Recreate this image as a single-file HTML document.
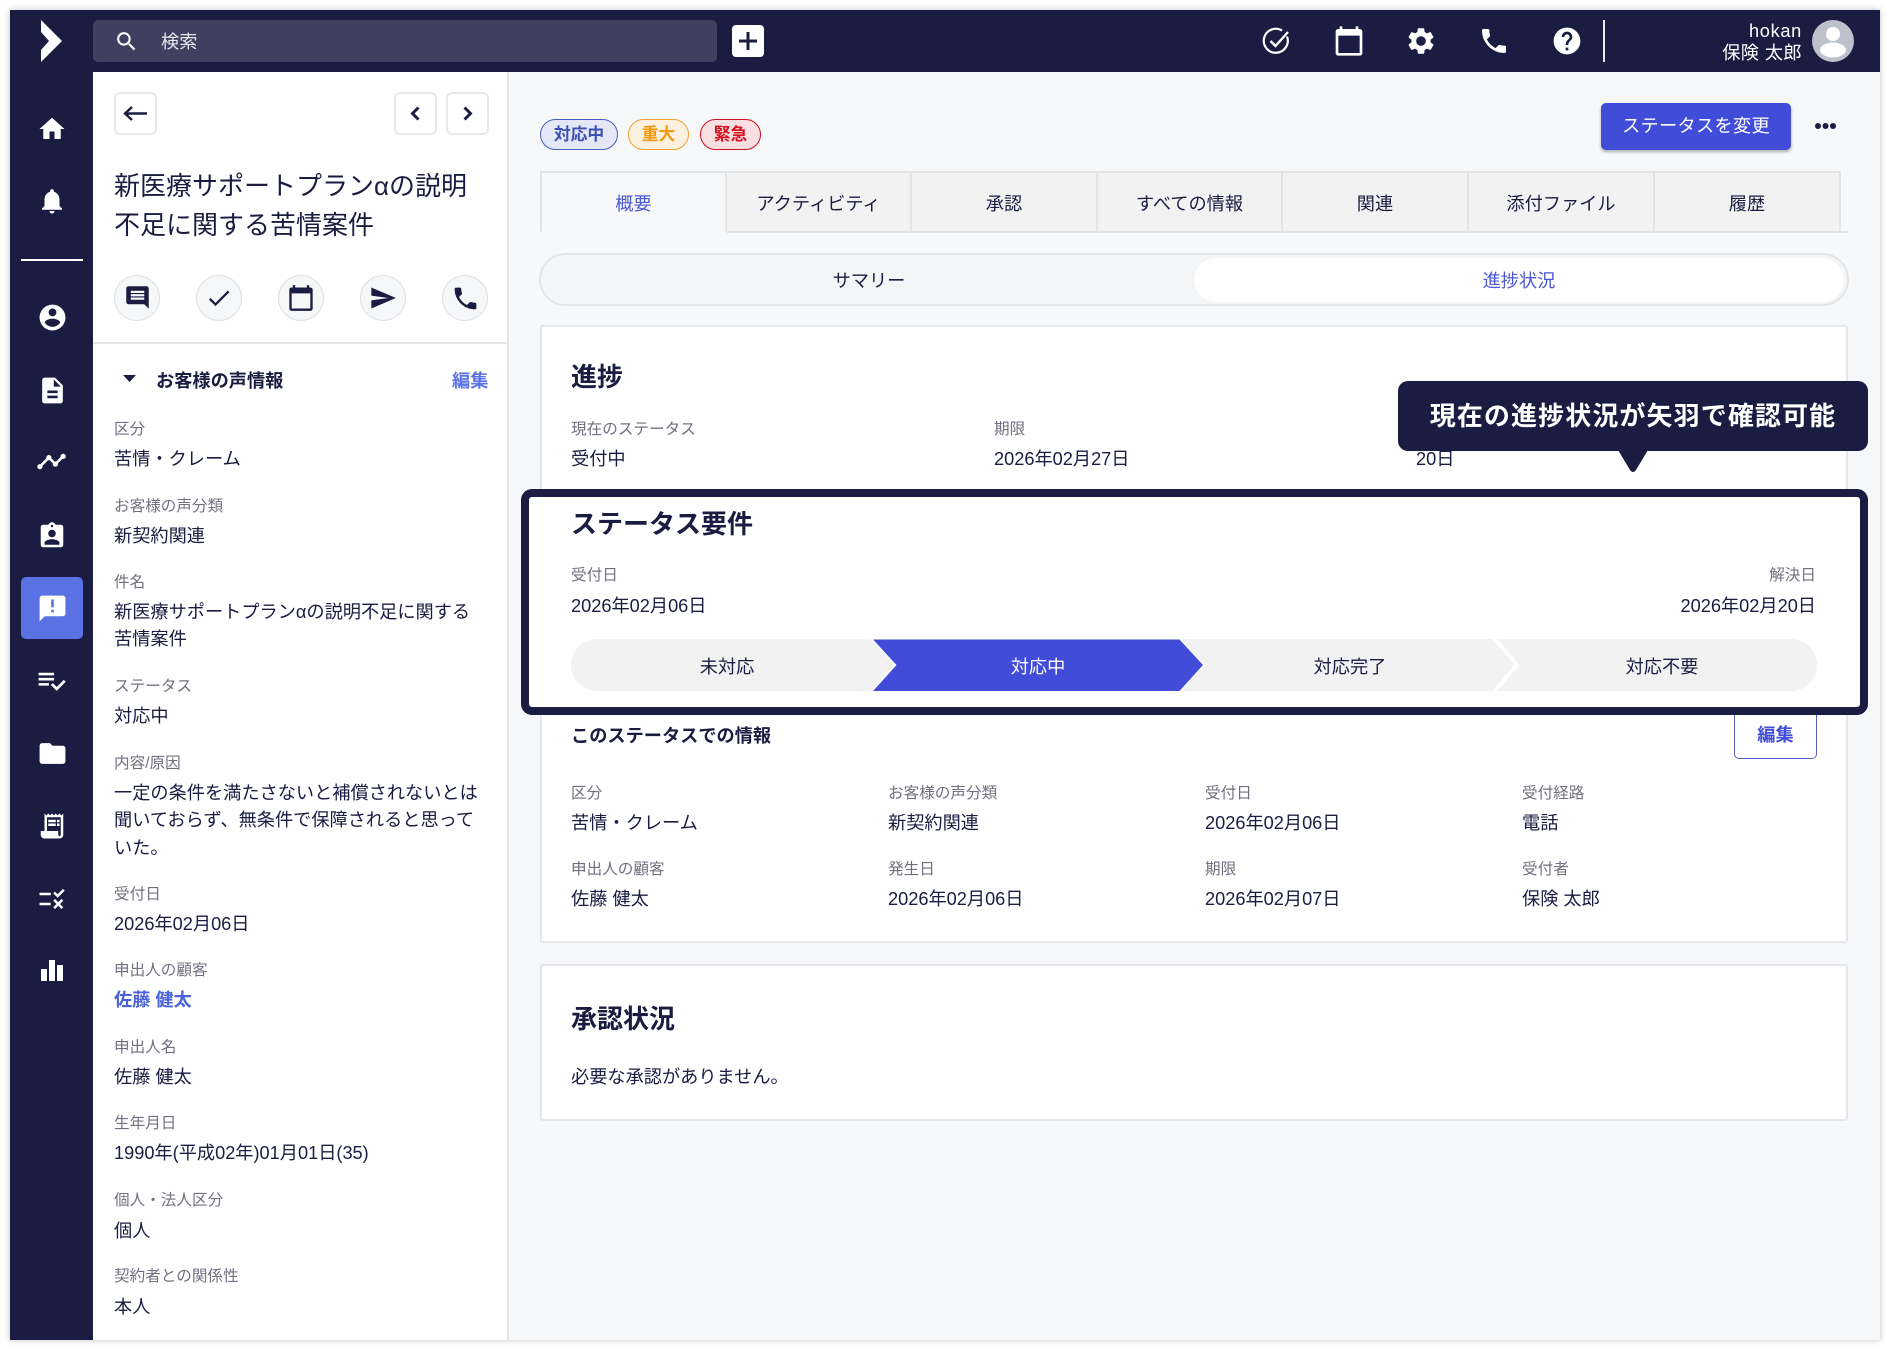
<!DOCTYPE html>
<html lang="ja"><head><meta charset="utf-8"><title>hokan</title>
<style>
*{box-sizing:border-box}
html,body{margin:0;padding:0;width:1890px;height:1350px;overflow:hidden;background:#fff}
body{font-family:"Liberation Sans","Noto Sans CJK JP",sans-serif;color:#1a1c42;position:relative}
.a{position:absolute}
.l,.v,.h,.c{position:absolute;white-space:nowrap}
.l{font-size:15.6px;line-height:20px;color:#70717f}
.v{font-size:18.2px;line-height:24px;color:#1a1c42}
.h{font-size:26px;line-height:36px;font-weight:700;color:#1a1c42}
.c{font-size:18.2px;line-height:24px;text-align:center}
svg{position:absolute;display:block}
.ib{position:absolute;background:#fff;border:2px solid #e7e8ea;border-radius:6px;width:43px;height:43px;top:92px}
.ci{position:absolute;top:275px;width:46px;height:46px;border-radius:50%;background:#f6f7f8;border:1.5px solid #dfe0e3}
.tab{position:absolute;top:171px;height:62px;background:#f2f2f2;border:2px solid #e2e3e5;border-left-width:0;text-align:center;font-size:18.2px;line-height:62px}
.pill{position:absolute;top:119px;height:31px;border-radius:16px;border:1.5px solid;font-size:16.8px;font-weight:700;line-height:29px;text-align:center}
</style></head><body>
<div class="a" style="left:10px;top:10px;width:1870px;height:1330px;background:#f7f8fa;box-shadow:0 0 6px rgba(0,0,0,.25)"></div>

<!-- sidebar / header -->
<div class="a" style="left:10px;top:10px;width:83px;height:1330px;background:#1a1c42"></div>
<div class="a" style="left:10px;top:10px;width:1870px;height:62px;background:#1a1c42"></div>
<svg style="left:0;top:0" width="93" height="72"><polygon points="41,20 62,41 41,62 41,50 49,41 41,32" fill="#fff"/></svg>
<div class="a" style="left:21px;top:259px;width:62px;height:2px;background:#fff"></div>
<div class="a" style="left:21px;top:577px;width:62px;height:62px;background:#5a72e4;border-radius:5px"></div>

<svg style="left:37px;top:114px" width="30" height="30" viewBox="0 0 24 24" fill="#fff"><path d="M10 20v-6h4v6h5v-8h3L12 3 2 12h3v8z"/></svg>
<svg style="left:37px;top:186px" width="30" height="30" viewBox="0 0 24 24" fill="#fff"><path d="M12 22c1.1 0 2-.9 2-2h-4c0 1.1.89 2 2 2zm6-6v-5c0-3.07-1.64-5.64-4.500-6.320V4c0-.83-.67-1.500-1.500-1.500s-1.500.67-1.500 1.500v.68C7.630 5.360 6 7.920 6 11v5l-2 2v1h16v-1l-2-2z"/></svg>
<svg style="left:37px;top:302px" width="31" height="31" viewBox="0 0 24 24" fill="#fff"><path d="M12 2C6.480 2 2 6.480 2 12s4.480 10 10 10 10-4.480 10-10S17.520 2 12 2zm0 3c1.660 0 3 1.340 3 3s-1.340 3-3 3-3-1.340-3-3 1.340-3 3-3zm0 14.200c-2.500 0-4.710-1.280-6-3.220.03-1.990 4-3.080 6-3.080 1.990 0 5.970 1.090 6 3.080-1.290 1.940-3.500 3.220-6 3.220z"/></svg>
<svg style="left:37px;top:375px" width="31" height="31" viewBox="0 0 24 24" fill="#fff"><path d="M14 2H6c-1.100 0-1.990.9-1.990 2L4 20c0 1.100.89 2 1.990 2H18c1.100 0 2-.9 2-2V8l-6-6zm2 16H8v-2h8v2zm0-4H8v-2h8v2zm-3-5V3.500L18.500 9H13z"/></svg>
<svg style="left:36px;top:446px" width="31" height="31" viewBox="0 0 24 24" fill="#fff"><path d="M23 8c0 1.100-.9 2-2 2-.18 0-.35-.02-.51-.07l-3.560 3.550c.05.16.07.34.07.52 0 1.100-.9 2-2 2s-2-.9-2-2c0-.18.02-.36.07-.52l-2.550-2.550c-.16.05-.34.07-.52.07s-.36-.02-.52-.07l-4.550 4.560c.05.16.07.33.07.51 0 1.100-.9 2-2 2s-2-.9-2-2 .9-2 2-2c.18 0 .35.02.51.07l4.560-4.550C8.020 9.360 8 9.180 8 9c0-1.100.9-2 2-2s2 .9 2 2c0 .18-.02.36-.07.52l2.550 2.550c.16-.05.34-.07.52-.07s.36.02.52.07l3.550-3.560C19.020 8.350 19 8.180 19 8c0-1.100.9-2 2-2s2 .9 2 2z"/></svg>
<svg style="left:37px;top:521px" width="30" height="30" viewBox="0 0 24 24" fill="#fff"><path d="M19 3h-4.180C14.400 1.840 13.300 1 12 1c-1.300 0-2.400.84-2.820 2H5c-1.100 0-2 .9-2 2v14c0 1.100.9 2 2 2h14c1.100 0 2-.9 2-2V5c0-1.100-.9-2-2-2zm-7 0c.55 0 1 .45 1 1s-.45 1-1 1-1-.45-1-1 .45-1 1-1zm0 4c1.660 0 3 1.340 3 3s-1.340 3-3 3-3-1.340-3-3 1.340-3 3-3zm6 12H6v-1.400c0-2 4-3.100 6-3.100s6 1.100 6 3.100V19z"/></svg>
<svg style="left:37px;top:593px" width="31" height="31" viewBox="0 0 24 24" fill="#fff"><path d="M20 2H4c-1.100 0-1.990.9-1.990 2L2 22l4-4h14c1.100 0 2-.9 2-2V4c0-1.100-.9-2-2-2zm-7 9h-2V5h2v6zm0 4h-2v-2h2v2z"/></svg>
<svg style="left:36px;top:665px" width="31" height="31" viewBox="0 0 24 24" fill="#fff"><path d="M14 10H2v2h12v-2zm0-4H2v2h12V6zM2 16h8v-2H2v2zm19.500-4.500L23 13l-6.990 7-4.510-4.500L13 14l3.010 3 5.490-5.500z"/></svg>
<svg style="left:37px;top:738px" width="31" height="31" viewBox="0 0 24 24" fill="#fff"><path d="M10 4H4c-1.100 0-1.990.9-1.990 2L2 18c0 1.100.9 2 2 2h16c1.100 0 2-.9 2-2V8c0-1.100-.9-2-2-2h-8l-2-2z"/></svg>
<svg style="left:37px;top:811px" width="30" height="30" viewBox="0 0 24 24" fill="#fff"><path d="M19.500 3.500 18 2l-1.500 1.500L15 2l-1.500 1.500L12 2l-1.500 1.500L9 2 7.500 3.500 6 2v14H3v3c0 1.660 1.340 3 3 3h12c1.660 0 3-1.340 3-3V2l-1.500 1.500zM19 19c0 .55-.45 1-1 1s-1-.45-1-1v-3H8V5h11v14zM9 7h6v2H9zM16 7h2v2h-2zM9 10h6v2H9zM16 10h2v2h-2z"/></svg>
<svg style="left:37px;top:884px" width="30" height="30" viewBox="0 0 24 24" fill="#fff"><path d="M16.540 11 13 7.460l1.410-1.410 2.120 2.120 4.240-4.240 1.410 1.410L16.540 11zM11 7H2v2h9V7zm10 6.410L19.590 12 17 14.590 14.410 12 13 13.410 15.590 16 13 18.590 14.410 20 17 17.410 19.590 20 21 18.590 18.410 16 21 13.410zM11 15H2v2h9v-2z"/></svg>
<svg style="left:30px;top:955px" width="44" height="32" fill="#fff"><rect x="11" y="14" width="6" height="12"/><rect x="19" y="5" width="6" height="21"/><rect x="27" y="10" width="6" height="16"/></svg>

<!-- top bar -->
<div class="a" style="left:93px;top:20px;width:624px;height:42px;background:#3f405f;border-radius:5px"></div>
<svg style="left:114px;top:29px" width="25" height="25" viewBox="0 0 24 24" fill="#fff"><path d="M15.500 14h-.79l-.28-.27C15.410 12.590 16 11.110 16 9.500 16 5.910 13.090 3 9.500 3S3 5.910 3 9.500 5.910 16 9.500 16c1.610 0 3.090-.59 4.230-1.570l.27.28v.79l5 4.990L20.490 19l-4.990-5zm-6 0C7.010 14 5 11.990 5 9.500S7.010 5 9.500 5 14 7.010 14 9.500 11.990 14 9.500 14z"/></svg>
<div class="v" style="left:161px;top:30px;color:#e6e6ec">検索</div>
<div class="a" style="left:732px;top:25px;width:32px;height:32px;background:#fff;border-radius:4px"></div>
<svg style="left:732px;top:25px" width="32" height="32"><path d="M16 7v18M7 16h18" stroke="#1a1c42" stroke-width="3"/></svg>

<svg style="left:1262px;top:26px" width="30" height="30" viewBox="0 0 30 30" fill="none" stroke="#fff" stroke-width="2.200"><path d="M25 10.500A12 12 0 1 1 20 4.500"/><path d="M8.500 15l5 5L26 6" stroke-width="2.400"/></svg>
<svg style="left:1333px;top:25px" width="32" height="32" viewBox="0 0 24 24" fill="#fff"><path d="M20 3h-1V1h-2v2H7V1H5v2H4c-1.100 0-2 .9-2 2v16c0 1.100.9 2 2 2h16c1.100 0 2-.9 2-2V5c0-1.100-.9-2-2-2zm0 18H4V8h16v13z"/></svg>
<svg style="left:1405px;top:25px" width="32" height="32" viewBox="0 0 24 24" fill="#fff"><path d="M19.140 12.940c.04-.3.06-.61.06-.94 0-.32-.02-.64-.07-.94l2.030-1.580c.18-.14.23-.41.12-.61l-1.920-3.320c-.12-.22-.37-.29-.59-.22l-2.390.96c-.5-.38-1.030-.7-1.620-.94l-.36-2.540c-.04-.24-.24-.41-.48-.41h-3.840c-.24 0-.43.17-.47.41l-.36 2.540c-.59.24-1.130.57-1.620.94l-2.390-.96c-.22-.08-.47 0-.59.22L2.740 8.870c-.12.21-.08.47.12.61l2.030 1.580c-.05.3-.09.63-.09.94s.02.64.07.94l-2.030 1.580c-.18.14-.23.41-.12.61l1.920 3.320c.12.22.37.29.59.22l2.390-.96c.5.38 1.030.7 1.620.94l.36 2.540c.05.24.24.41.48.41h3.840c.24 0 .44-.17.47-.41l.36-2.540c.59-.24 1.130-.56 1.620-.94l2.390.96c.22.08.47 0 .59-.22l1.920-3.320c.12-.22.07-.47-.12-.61l-2.010-1.580zM12 15.600c-1.980 0-3.600-1.620-3.600-3.600s1.620-3.600 3.600-3.600 3.600 1.620 3.600 3.600-1.620 3.600-3.600 3.600z"/></svg>
<svg style="left:1478px;top:25px" width="32" height="32" viewBox="0 0 24 24" fill="#fff"><path d="M6.620 10.790c1.440 2.830 3.760 5.140 6.590 6.590l2.200-2.200c.27-.27.67-.36 1.020-.24 1.120.37 2.330.57 3.570.57.55 0 1 .45 1 1V20c0 .55-.45 1-1 1-9.390 0-17-7.610-17-17 0-.55.45-1 1-1h3.500c.55 0 1 .45 1 1 0 1.250.2 2.450.57 3.570.11.35.03.74-.25 1.020l-2.200 2.200z"/></svg>
<svg style="left:1551px;top:25px" width="32" height="32" viewBox="0 0 24 24" fill="#fff"><path d="M12 2C6.480 2 2 6.480 2 12s4.480 10 10 10 10-4.480 10-10S17.520 2 12 2zm1 17h-2v-2h2v2zm2.070-7.750-.9.92C13.450 12.900 13 13.500 13 15h-2v-.5c0-1.100.45-2.100 1.170-2.830l1.240-1.260c.37-.36.59-.86.59-1.410 0-1.100-.9-2-2-2s-2 .9-2 2H8c0-2.210 1.790-4 4-4s4 1.790 4 4c0 .88-.36 1.680-.93 2.250z"/></svg>
<div class="a" style="left:1603px;top:20px;width:2px;height:42px;background:#e8e8ee"></div>
<div class="v" style="right:88px;top:19px;color:#fff;letter-spacing:.7px">hokan</div>
<div class="v" style="right:88px;top:41px;color:#fff;letter-spacing:.4px">保険 太郎</div>
<svg style="left:1812px;top:20px" width="42" height="42" viewBox="0 0 42 42"><circle cx="21" cy="21" r="21" fill="#bcc1cc"/><circle cx="21" cy="14" r="7" fill="#fff"/><ellipse cx="21" cy="30" rx="13" ry="7.500" fill="#fff"/></svg>

<!-- left panel -->
<div class="a" style="left:93px;top:72px;width:416px;height:1268px;background:#fff;border-right:2px solid #e3e5e8"></div>
<div class="a" style="left:93px;top:342px;width:415px;height:2px;background:#e3e5e8"></div>
<div class="ib" style="left:114px"></div><div class="ib" style="left:394px"></div><div class="ib" style="left:446px"></div>
<svg style="left:114px;top:92px" width="43" height="43" fill="none" stroke="#1a1c42" stroke-width="2.400"><path d="M33 21.500H11M18 15l-7 6.500 7 6.500"/></svg>
<svg style="left:394px;top:92px" width="43" height="43" fill="none" stroke="#1a1c42" stroke-width="3"><path d="M24.500 15.500 18.500 21.500 24.500 27.500"/></svg>
<svg style="left:446px;top:92px" width="43" height="43" fill="none" stroke="#1a1c42" stroke-width="3"><path d="M18.500 15.500 24.500 21.500 18.500 27.500"/></svg>
<div class="a" style="left:114px;top:167px;font-size:26px;line-height:39px;white-space:nowrap">新医療サポートプランαの説明<br>不足に関する苦情案件</div>

<div class="ci" style="left:114px"></div><div class="ci" style="left:196px"></div><div class="ci" style="left:278px"></div><div class="ci" style="left:360px"></div><div class="ci" style="left:442px"></div>
<svg style="left:124px;top:284px" width="27" height="27" viewBox="0 0 24 24" fill="#1a1c42"><path d="M21.990 4c0-1.100-.89-2-1.990-2H4c-1.100 0-2 .9-2 2v12c0 1.100.9 2 2 2h14l4 4-.01-18zM18 14H6v-2h12v2zm0-3H6V9h12v2zm0-3H6V6h12v2z"/></svg>
<svg style="left:205px;top:284px" width="28" height="28" viewBox="0 0 24 24" fill="#1a1c42"><path d="M9 16.170 4.830 12l-1.420 1.410L9 19 21 7l-1.410-1.410z"/></svg>
<svg style="left:287px;top:284px" width="28" height="28" viewBox="0 0 24 24" fill="#1a1c42"><path d="M20 3h-1V1h-2v2H7V1H5v2H4c-1.100 0-2 .9-2 2v16c0 1.100.9 2 2 2h16c1.100 0 2-.9 2-2V5c0-1.100-.9-2-2-2zm0 18H4V8h16v13z"/></svg>
<svg style="left:369px;top:284px" width="28" height="28" viewBox="0 0 24 24" fill="#1a1c42"><path d="M2.010 21 23 12 2.010 3 2 10l15 2-15 2z"/></svg>
<svg style="left:451px;top:284px" width="29" height="29" viewBox="0 0 24 24" fill="#1a1c42"><path d="M6.620 10.790c1.440 2.830 3.760 5.140 6.590 6.590l2.200-2.200c.27-.27.67-.36 1.020-.24 1.120.37 2.330.57 3.570.57.55 0 1 .45 1 1V20c0 .55-.45 1-1 1-9.390 0-17-7.610-17-17 0-.55.45-1 1-1h3.500c.55 0 1 .45 1 1 0 1.250.2 2.450.57 3.570.11.35.03.74-.25 1.020l-2.200 2.200z"/></svg>

<svg style="left:120px;top:372px" width="20" height="14"><polygon points="3,3 16,3 9.500,10" fill="#1a1c42"/></svg>
<div class="v" style="left:156px;top:369px;font-weight:700">お客様の声情報</div>
<div class="v" style="left:452px;top:369px;font-weight:700;color:#5a72e4">編集</div>

<div class="l" style="left:114px;top:420px">区分</div><div class="v" style="left:114px;top:447px">苦情・クレーム</div>
<div class="l" style="left:114px;top:497px">お客様の声分類</div><div class="v" style="left:114px;top:524px">新契約関連</div>
<div class="l" style="left:114px;top:573px">件名</div><div class="v" style="left:114px;top:598.500px;line-height:27.500px">新医療サポートプランαの説明不足に関する<br>苦情案件</div>
<div class="l" style="left:114px;top:677px">ステータス</div><div class="v" style="left:114px;top:704px">対応中</div>
<div class="l" style="left:114px;top:754px">内容/原因</div><div class="v" style="left:114px;top:779.500px;line-height:27.500px">一定の条件を満たさないと補償されないとは<br>聞いておらず、無条件で保障されると思って<br>いた。</div>
<div class="l" style="left:114px;top:885px">受付日</div><div class="v" style="left:114px;top:912px">2026年02月06日</div>
<div class="l" style="left:114px;top:961px">申出人の顧客</div><div class="v" style="left:114px;top:988px;font-weight:700;color:#4c62dc">佐藤 健太</div>
<div class="l" style="left:114px;top:1038px">申出人名</div><div class="v" style="left:114px;top:1065px">佐藤 健太</div>
<div class="l" style="left:114px;top:1114px">生年月日</div><div class="v" style="left:114px;top:1141px">1990年(平成02年)01月01日(35)</div>
<div class="l" style="left:114px;top:1191px">個人・法人区分</div><div class="v" style="left:114px;top:1219px">個人</div>
<div class="l" style="left:114px;top:1267px">契約者との関係性</div><div class="v" style="left:114px;top:1295px">本人</div>

<!-- pills & button -->
<div class="pill" style="left:540px;width:78px;background:#e4e7f6;border-color:#4a5cc0;color:#3d4fb5">対応中</div>
<div class="pill" style="left:628px;width:61px;background:#fcf0df;border-color:#f0a030;color:#f09a10">重大</div>
<div class="pill" style="left:700px;width:61px;background:#f9dfe1;border-color:#cc1122;color:#d80f1f">緊急</div>
<div class="a" style="left:1601px;top:103px;width:190px;height:47px;background:#414cd8;border-radius:5px;box-shadow:0 2px 3px rgba(0,0,0,.3);color:#fff;font-size:18.200px;letter-spacing:.3px;line-height:47px;text-align:center">ステータスを変更</div>
<svg style="left:1811px;top:120px" width="28" height="12" fill="#1a1c42"><circle cx="7" cy="6" r="3"/><circle cx="14.500" cy="6" r="3"/><circle cx="22" cy="6" r="3"/></svg>

<!-- tabs -->
<div class="a" style="left:540px;top:231px;width:1308px;height:2px;background:#e2e3e5"></div>
<div class="tab" style="left:540px;width:187px;background:#f7f8fa;border-left-width:2px;border-bottom-color:#f7f8fa;color:#4a58d4">概要</div>
<div class="tab" style="left:727px;width:185px">アクティビティ</div>
<div class="tab" style="left:912px;width:186px">承認</div>
<div class="tab" style="left:1098px;width:185px">すべての情報</div>
<div class="tab" style="left:1283px;width:186px">関連</div>
<div class="tab" style="left:1469px;width:186px">添付ファイル</div>
<div class="tab" style="left:1655px;width:186px">履歴</div>

<!-- segmented -->
<div class="a" style="left:539px;top:253px;width:1310px;height:53px;background:#f4f5f6;border:2px solid #e4e5e7;border-radius:27px"></div>
<div class="a" style="left:1194px;top:258px;width:650px;height:44px;background:#fff;border-radius:22px"></div>
<div class="c" style="left:539px;width:660px;top:269px">サマリー</div>
<div class="c" style="left:1194px;width:650px;top:269px;color:#4a58d4">進捗状況</div>

<!-- card 1 -->
<div class="a" style="left:540px;top:325px;width:1308px;height:618px;background:#fff;border:2px solid #e6e7ea;border-radius:3px"></div>
<div class="h" style="left:571px;top:359px">進捗</div>
<div class="l" style="left:571px;top:419.500px">現在のステータス</div><div class="v" style="left:571px;top:447px">受付中</div>
<div class="l" style="left:994px;top:419.500px">期限</div><div class="v" style="left:994px;top:447px">2026年02月27日</div>
<div class="v" style="left:1416px;top:447px">20日</div>

<!-- highlight -->
<div class="a" style="left:521px;top:489px;width:1347px;height:226px;background:#fff;border:8px solid #1a1c42;border-radius:11px"></div>
<div class="h" style="left:571px;top:506px">ステータス要件</div>
<div class="l" style="left:571px;top:566px">受付日</div><div class="v" style="left:571px;top:594px">2026年02月06日</div>
<div class="l" style="right:74px;top:566px">解決日</div><div class="v" style="right:74px;top:594px">2026年02月20日</div>
<svg style="left:560px;top:630px" width="1270" height="70" viewBox="560 630 1270 70">
<rect x="571" y="639" width="1246" height="52" rx="26" fill="#f2f2f2"/>
<path d="M1493 637 L1517 665 L1493 693" fill="none" stroke="#fff" stroke-width="4"/>
<polygon points="873,639.500 1179.500,639.500 1203,665 1179.500,691 873,691 896.500,665" fill="#414cd8" stroke="#fff" stroke-width="3" paint-order="stroke"/>
</svg>
<div class="c" style="left:571px;width:312px;top:655px">未対応</div>
<div class="c" style="left:883px;width:310px;top:655px;color:#fff">対応中</div>
<div class="c" style="left:1195px;width:310px;top:655px">対応完了</div>
<div class="c" style="left:1507px;width:310px;top:655px">対応不要</div>

<div class="v" style="left:571px;top:724px;font-weight:700">このステータスでの情報</div>
<div class="c" style="left:1734px;top:715px;width:83px;height:44px;border:1.500px solid #5560c4;border-top:0;border-radius:0 0 5px 5px;color:#414cd8;font-weight:700;line-height:41px;background:#fff">編集</div>

<div class="l" style="left:571px;top:784px">区分</div><div class="v" style="left:571px;top:811px">苦情・クレーム</div>
<div class="l" style="left:888px;top:784px">お客様の声分類</div><div class="v" style="left:888px;top:811px">新契約関連</div>
<div class="l" style="left:1205px;top:784px">受付日</div><div class="v" style="left:1205px;top:811px">2026年02月06日</div>
<div class="l" style="left:1522px;top:784px">受付経路</div><div class="v" style="left:1522px;top:811px">電話</div>
<div class="l" style="left:571px;top:859.500px">申出人の顧客</div><div class="v" style="left:571px;top:887px">佐藤 健太</div>
<div class="l" style="left:888px;top:859.500px">発生日</div><div class="v" style="left:888px;top:887px">2026年02月06日</div>
<div class="l" style="left:1205px;top:859.500px">期限</div><div class="v" style="left:1205px;top:887px">2026年02月07日</div>
<div class="l" style="left:1522px;top:859.500px">受付者</div><div class="v" style="left:1522px;top:887px">保険 太郎</div>

<!-- card 2 -->
<div class="a" style="left:540px;top:964px;width:1308px;height:157px;background:#fff;border:2px solid #e6e7ea;border-radius:3px"></div>
<div class="h" style="left:571px;top:1001px">承認状況</div>
<div class="v" style="left:571px;top:1065px">必要な承認がありません。</div>

<!-- tooltip -->
<div class="a" style="left:1398px;top:381px;width:470px;height:70px;background:#1a1c42;border-radius:10px;color:#fff;font-size:26px;font-weight:700;line-height:70px;letter-spacing:1.100px;text-align:center;white-space:nowrap">現在の進捗状況が矢羽で確認可能</div>
<svg style="left:1617px;top:450px" width="32" height="24"><path d="M1 0H31L19 20Q16 24 13 20Z" fill="#1a1c42"/></svg>
</body></html>
